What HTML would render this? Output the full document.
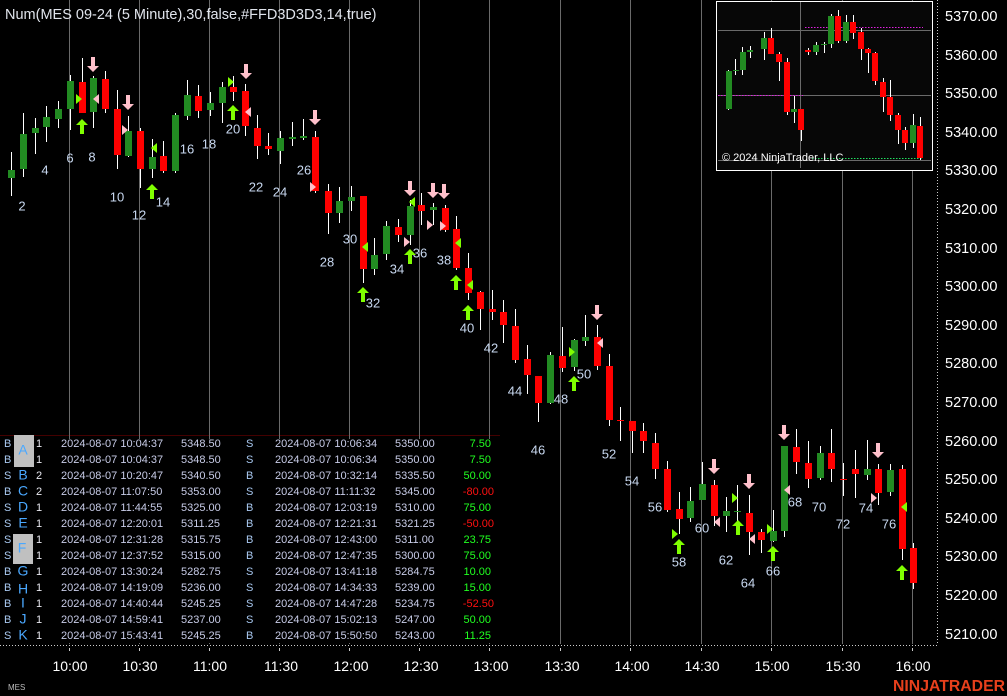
<!DOCTYPE html>
<html><head><meta charset="utf-8"><style>
html,body{margin:0;padding:0;background:#000;width:1007px;height:696px;overflow:hidden}
svg{display:block}
text{font-family:"Liberation Sans",sans-serif}
.n{fill:#c8d8f0;font-size:13px;text-anchor:middle;dominant-baseline:middle;font-family:"DejaVu Sans","Liberation Sans",sans-serif}
.t{font-size:11px;dominant-baseline:middle;font-family:"Liberation Sans",sans-serif}
</style></head><body>
<svg width="1007" height="696" viewBox="0 0 1007 696" xmlns="http://www.w3.org/2000/svg">
<defs>
<path id="up" d="M0,0 L6,6 L2,6 L2,15 L-2,15 L-2,6 L-6,6Z" fill="#80ff00"/>
<path id="dn" d="M-2,0 L2,0 L2,9 L6,9 L0,15 L-6,9 L-2,9Z" fill="#ffc0cb"/>
<path id="lr" d="M-3,-5 L3,0 L-3,5Z" fill="#80ff00"/>
<path id="ll" d="M3,-5 L-3,0 L3,5Z" fill="#80ff00"/>
<path id="pr" d="M-3,-5 L3,0 L-3,5Z" fill="#ffc0cb"/>
<path id="pl" d="M3,-5 L-3,0 L3,5Z" fill="#ffc0cb"/>
</defs>
<rect width="1007" height="696" fill="#000"/>
<g stroke="#6a6a6a" stroke-width="1">
<line x1="69.5" y1="0" x2="69.5" y2="644"/><line x1="139.5" y1="0" x2="139.5" y2="644"/><line x1="209.5" y1="0" x2="209.5" y2="644"/><line x1="279.5" y1="0" x2="279.5" y2="644"/><line x1="349.5" y1="0" x2="349.5" y2="644"/><line x1="419.5" y1="0" x2="419.5" y2="644"/><line x1="489.5" y1="0" x2="489.5" y2="644"/><line x1="560.5" y1="0" x2="560.5" y2="644"/><line x1="630.5" y1="0" x2="630.5" y2="644"/><line x1="701.5" y1="0" x2="701.5" y2="644"/><line x1="771.5" y1="0" x2="771.5" y2="644"/><line x1="842.5" y1="0" x2="842.5" y2="644"/><line x1="912.5" y1="0" x2="912.5" y2="644"/>
</g>
<g stroke="#fff" stroke-width="1">
<line x1="11.5" y1="152" x2="11.5" y2="196"/><line x1="23.5" y1="113" x2="23.5" y2="177"/><line x1="35.5" y1="118" x2="35.5" y2="154"/><line x1="46.5" y1="106" x2="46.5" y2="142"/><line x1="58.5" y1="101" x2="58.5" y2="128"/><line x1="70.5" y1="75" x2="70.5" y2="130"/><line x1="82.5" y1="58" x2="82.5" y2="113"/><line x1="93.5" y1="76" x2="93.5" y2="128"/><line x1="105.5" y1="71" x2="105.5" y2="113"/><line x1="117.5" y1="90" x2="117.5" y2="169"/><line x1="128.5" y1="116" x2="128.5" y2="157"/><line x1="140.5" y1="128" x2="140.5" y2="188"/><line x1="152.5" y1="139" x2="152.5" y2="178"/><line x1="163.5" y1="141" x2="163.5" y2="173"/><line x1="175.5" y1="113" x2="175.5" y2="173"/><line x1="187.5" y1="80" x2="187.5" y2="120"/><line x1="198.5" y1="85" x2="198.5" y2="118"/><line x1="210.5" y1="92" x2="210.5" y2="116"/><line x1="222.5" y1="82" x2="222.5" y2="123"/><line x1="233.5" y1="76" x2="233.5" y2="101"/><line x1="245.5" y1="84" x2="245.5" y2="136"/><line x1="257.5" y1="115" x2="257.5" y2="159"/><line x1="268.5" y1="133" x2="268.5" y2="155"/><line x1="280.5" y1="131" x2="280.5" y2="164"/><line x1="292.5" y1="122" x2="292.5" y2="146"/><line x1="303.5" y1="119" x2="303.5" y2="140"/><line x1="315.5" y1="131" x2="315.5" y2="193"/><line x1="328.5" y1="184" x2="328.5" y2="234"/><line x1="339.5" y1="187" x2="339.5" y2="223"/><line x1="351.5" y1="186" x2="351.5" y2="211"/><line x1="363.5" y1="196" x2="363.5" y2="283"/><line x1="374.5" y1="238" x2="374.5" y2="275"/><line x1="386.5" y1="221" x2="386.5" y2="260"/><line x1="398.5" y1="219" x2="398.5" y2="242"/><line x1="410.5" y1="200" x2="410.5" y2="245"/><line x1="421.5" y1="193" x2="421.5" y2="225"/><line x1="433.5" y1="203" x2="433.5" y2="225"/><line x1="445.5" y1="205" x2="445.5" y2="232"/><line x1="456.5" y1="216" x2="456.5" y2="270"/><line x1="468.5" y1="253" x2="468.5" y2="300"/><line x1="480.5" y1="291" x2="480.5" y2="330"/><line x1="492.5" y1="290" x2="492.5" y2="320"/><line x1="503.5" y1="300" x2="503.5" y2="343"/><line x1="515.5" y1="309" x2="515.5" y2="363"/><line x1="527.5" y1="345" x2="527.5" y2="394"/><line x1="538.5" y1="376" x2="538.5" y2="422"/><line x1="550.5" y1="352" x2="550.5" y2="404"/><line x1="562.5" y1="327" x2="562.5" y2="372"/><line x1="574.5" y1="339" x2="574.5" y2="371"/><line x1="585.5" y1="315" x2="585.5" y2="346"/><line x1="597.5" y1="325" x2="597.5" y2="370"/><line x1="609.5" y1="354" x2="609.5" y2="426"/><line x1="620.5" y1="407" x2="620.5" y2="441"/><line x1="632.5" y1="421" x2="632.5" y2="453"/><line x1="643.5" y1="423" x2="643.5" y2="453"/><line x1="655.5" y1="433" x2="655.5" y2="479"/><line x1="667.5" y1="461" x2="667.5" y2="512"/><line x1="679.5" y1="492" x2="679.5" y2="534"/><line x1="690.5" y1="487" x2="690.5" y2="522"/><line x1="702.5" y1="462" x2="702.5" y2="500"/><line x1="714.5" y1="480" x2="714.5" y2="526"/><line x1="726.5" y1="497" x2="726.5" y2="532"/><line x1="737.5" y1="485" x2="737.5" y2="532"/><line x1="749.5" y1="495" x2="749.5" y2="555"/><line x1="761.5" y1="529" x2="761.5" y2="553"/><line x1="773.5" y1="510" x2="773.5" y2="542"/><line x1="784.5" y1="446" x2="784.5" y2="537"/><line x1="796.5" y1="429" x2="796.5" y2="474"/><line x1="808.5" y1="441" x2="808.5" y2="488"/><line x1="820.5" y1="446" x2="820.5" y2="480"/><line x1="831.5" y1="429" x2="831.5" y2="482"/><line x1="843.5" y1="463" x2="843.5" y2="496"/><line x1="855.5" y1="450" x2="855.5" y2="498"/><line x1="867.5" y1="440" x2="867.5" y2="480"/><line x1="878.5" y1="464" x2="878.5" y2="505"/><line x1="890.5" y1="464" x2="890.5" y2="496"/><line x1="902.5" y1="465" x2="902.5" y2="560"/><line x1="913.5" y1="543" x2="913.5" y2="589"/>
</g>
<g fill="#228b22">
<rect x="8" y="170" width="7" height="8"/><rect x="20" y="134" width="7" height="35"/><rect x="32" y="128" width="7" height="5"/><rect x="43" y="117" width="7" height="10"/><rect x="55" y="109" width="7" height="10"/><rect x="67" y="81" width="7" height="28"/><rect x="90" y="78" width="7" height="34"/><rect x="125" y="131" width="7" height="25"/><rect x="149" y="157" width="7" height="12"/><rect x="172" y="115" width="7" height="56"/><rect x="184" y="95" width="7" height="21"/><rect x="207" y="103" width="7" height="7"/><rect x="219" y="87" width="7" height="16"/><rect x="277" y="138" width="7" height="13"/><rect x="289" y="137" width="7" height="2"/><rect x="300" y="136" width="7" height="2"/><rect x="336" y="201" width="7" height="12"/><rect x="348" y="197" width="7" height="4"/><rect x="371" y="255" width="7" height="14"/><rect x="383" y="226" width="7" height="28"/><rect x="407" y="206" width="7" height="29"/><rect x="430" y="207" width="7" height="3"/><rect x="547" y="355" width="7" height="48"/><rect x="571" y="340" width="7" height="27"/><rect x="582" y="337" width="7" height="4"/><rect x="687" y="501" width="7" height="17"/><rect x="699" y="484" width="7" height="16"/><rect x="723" y="511" width="7" height="5"/><rect x="734" y="511" width="7" height="1"/><rect x="770" y="531" width="7" height="10"/><rect x="781" y="446" width="7" height="85"/><rect x="817" y="453" width="7" height="25"/><rect x="864" y="469" width="7" height="6"/><rect x="887" y="470" width="7" height="22"/>
</g>
<g fill="#ff0000">
<rect x="79" y="82" width="7" height="31"/><rect x="102" y="79" width="7" height="30"/><rect x="114" y="109" width="7" height="46"/><rect x="137" y="131" width="7" height="38"/><rect x="160" y="156" width="7" height="15"/><rect x="195" y="96" width="7" height="15"/><rect x="230" y="87" width="7" height="5"/><rect x="242" y="91" width="7" height="35"/><rect x="254" y="128" width="7" height="18"/><rect x="265" y="146" width="7" height="3"/><rect x="312" y="137" width="7" height="54"/><rect x="325" y="191" width="7" height="22"/><rect x="360" y="196" width="7" height="73"/><rect x="395" y="227" width="7" height="8"/><rect x="418" y="205" width="7" height="6"/><rect x="442" y="208" width="7" height="22"/><rect x="453" y="229" width="7" height="39"/><rect x="465" y="268" width="7" height="25"/><rect x="477" y="292" width="7" height="17"/><rect x="489" y="309" width="7" height="3"/><rect x="500" y="312" width="7" height="13"/><rect x="512" y="326" width="7" height="34"/><rect x="524" y="359" width="7" height="16"/><rect x="535" y="376" width="7" height="27"/><rect x="559" y="356" width="7" height="12"/><rect x="594" y="337" width="7" height="29"/><rect x="606" y="366" width="7" height="54"/><rect x="617" y="420" width="7" height="1"/><rect x="629" y="421" width="7" height="10"/><rect x="640" y="431" width="7" height="10"/><rect x="652" y="443" width="7" height="26"/><rect x="664" y="469" width="7" height="41"/><rect x="676" y="509" width="7" height="10"/><rect x="711" y="485" width="7" height="31"/><rect x="746" y="513" width="7" height="19"/><rect x="758" y="532" width="7" height="8"/><rect x="793" y="447" width="7" height="15"/><rect x="805" y="463" width="7" height="16"/><rect x="828" y="453" width="7" height="16"/><rect x="840" y="479" width="7" height="1"/><rect x="852" y="469" width="7" height="5"/><rect x="875" y="469" width="7" height="24"/><rect x="899" y="469" width="7" height="80"/><rect x="910" y="548" width="7" height="35"/>
</g>
<use href="#up" x="82" y="119"/><use href="#up" x="152" y="184"/><use href="#up" x="233" y="105"/><use href="#up" x="363" y="287"/><use href="#up" x="410" y="249"/><use href="#up" x="456" y="275"/><use href="#up" x="468" y="305"/><use href="#up" x="574" y="376"/><use href="#up" x="679" y="539"/><use href="#up" x="738" y="520"/><use href="#up" x="773" y="546"/><use href="#up" x="902" y="565"/>
<use href="#dn" x="93" y="57"/><use href="#dn" x="128" y="95"/><use href="#dn" x="246" y="64"/><use href="#dn" x="315" y="110"/><use href="#dn" x="410" y="181"/><use href="#dn" x="433" y="183"/><use href="#dn" x="444" y="184"/><use href="#dn" x="597" y="305"/><use href="#dn" x="714" y="459"/><use href="#dn" x="749" y="474"/><use href="#dn" x="784" y="425"/><use href="#dn" x="878" y="443"/>
<use href="#lr" x="79" y="99"/><use href="#pl" x="96" y="99"/><use href="#pr" x="125" y="130"/><use href="#ll" x="154" y="148"/><use href="#lr" x="231" y="82"/><use href="#pl" x="248" y="112"/><use href="#pr" x="313" y="187"/><use href="#ll" x="365" y="247"/><use href="#pr" x="407" y="242"/><use href="#ll" x="412" y="202"/><use href="#pr" x="430" y="225"/><use href="#pr" x="443" y="226"/><use href="#ll" x="458" y="243"/><use href="#ll" x="470" y="285"/><use href="#lr" x="572" y="352"/><use href="#pl" x="600" y="343"/><use href="#lr" x="675" y="534"/><use href="#pl" x="717" y="522"/><use href="#lr" x="735" y="498"/><use href="#pl" x="752" y="539"/><use href="#lr" x="770" y="529"/><use href="#pl" x="787" y="490"/><use href="#pr" x="874" y="498"/><use href="#ll" x="904" y="507"/>
<g class="n">
<text x="22" y="207">2</text><text x="45" y="171">4</text><text x="70" y="159">6</text><text x="92" y="158">8</text><text x="117" y="198">10</text><text x="139" y="216">12</text><text x="163" y="203">14</text><text x="187" y="150">16</text><text x="209" y="145">18</text><text x="233" y="130">20</text><text x="256" y="188">22</text><text x="280" y="193">24</text><text x="304" y="171">26</text><text x="327" y="263">28</text><text x="350" y="240">30</text><text x="373" y="304">32</text><text x="397" y="270">34</text><text x="420" y="254">36</text><text x="444" y="261">38</text><text x="467" y="329">40</text><text x="491" y="349">42</text><text x="515" y="392">44</text><text x="538" y="451">46</text><text x="561" y="400">48</text><text x="584" y="375">50</text><text x="609" y="455">52</text><text x="632" y="482">54</text><text x="655" y="508">56</text><text x="679" y="563">58</text><text x="702" y="529">60</text><text x="726" y="561">62</text><text x="748" y="584">64</text><text x="773" y="572">66</text><text x="795" y="503">68</text><text x="819" y="508">70</text><text x="843" y="525">72</text><text x="866" y="509">74</text><text x="889" y="525">76</text>
</g>
<text x="5" y="19" fill="#e0e4ec" font-size="14.5">Num(MES 09-24 (5 Minute),30,false,#FFD3D3D3,14,true)</text>
<rect x="0" y="435" width="500" height="208" fill="#000"/>
<line x1="0" y1="435.5" x2="500" y2="435.5" stroke="#400" stroke-width="1"/>
<g stroke="#6a6a6a"><line x1="69.5" y1="435" x2="69.5" y2="439"/><line x1="139.5" y1="435" x2="139.5" y2="439"/><line x1="209.5" y1="435" x2="209.5" y2="439"/><line x1="279.5" y1="435" x2="279.5" y2="439"/><line x1="349.5" y1="435" x2="349.5" y2="439"/><line x1="419.5" y1="435" x2="419.5" y2="439"/><line x1="489.5" y1="435" x2="489.5" y2="439"/></g>
<rect x="14" y="435" width="20" height="32" fill="#c0c0c0"/>
<rect x="13" y="534" width="20" height="30" fill="#c0c0c0"/>
<g class="t">
<g fill="#a8c8f0"><text x="4" y="444">B</text><text x="4" y="460">B</text><text x="4" y="476">S</text><text x="4" y="492">B</text><text x="4" y="508">S</text><text x="4" y="524">S</text><text x="4" y="540">S</text><text x="4" y="556">S</text><text x="4" y="572">B</text><text x="4" y="588">B</text><text x="4" y="604">B</text><text x="4" y="620">B</text><text x="4" y="636">S</text></g>
<g fill="#4aa8ff" font-size="14" text-anchor="middle"><text x="23" y="451">A</text><text x="23" y="476">B</text><text x="23" y="492">C</text><text x="23" y="508">D</text><text x="23" y="524">E</text><text x="22" y="549">F</text><text x="23" y="572">G</text><text x="23" y="590">H</text><text x="23" y="604">I</text><text x="23" y="620">J</text><text x="23" y="636">K</text></g>
<g fill="#e8e8f0"><text x="36" y="444">1</text><text x="36" y="460">1</text><text x="36" y="476">2</text><text x="36" y="492">2</text><text x="36" y="508">1</text><text x="36" y="524">1</text><text x="36" y="540">1</text><text x="36" y="556">1</text><text x="36" y="572">1</text><text x="36" y="588">1</text><text x="36" y="604">1</text><text x="36" y="620">1</text><text x="36" y="636">1</text></g>
<g fill="#c8cce8"><text x="61" y="444">2024-08-07 10:04:37</text><text x="61" y="460">2024-08-07 10:04:37</text><text x="61" y="476">2024-08-07 10:20:47</text><text x="61" y="492">2024-08-07 11:07:50</text><text x="61" y="508">2024-08-07 11:44:55</text><text x="61" y="524">2024-08-07 12:20:01</text><text x="61" y="540">2024-08-07 12:31:28</text><text x="61" y="556">2024-08-07 12:37:52</text><text x="61" y="572">2024-08-07 13:30:24</text><text x="61" y="588">2024-08-07 14:19:09</text><text x="61" y="604">2024-08-07 14:40:44</text><text x="61" y="620">2024-08-07 14:59:41</text><text x="61" y="636">2024-08-07 15:43:41</text></g>
<g fill="#c8cce8"><text x="181" y="444">5348.50</text><text x="181" y="460">5348.50</text><text x="181" y="476">5340.50</text><text x="181" y="492">5353.00</text><text x="181" y="508">5325.00</text><text x="181" y="524">5311.25</text><text x="181" y="540">5315.75</text><text x="181" y="556">5315.00</text><text x="181" y="572">5282.75</text><text x="181" y="588">5236.00</text><text x="181" y="604">5245.25</text><text x="181" y="620">5237.00</text><text x="181" y="636">5245.25</text></g>
<g fill="#a8c8f0"><text x="246" y="444">S</text><text x="246" y="460">S</text><text x="246" y="476">B</text><text x="246" y="492">S</text><text x="246" y="508">B</text><text x="246" y="524">B</text><text x="246" y="540">B</text><text x="246" y="556">B</text><text x="246" y="572">S</text><text x="246" y="588">S</text><text x="246" y="604">S</text><text x="246" y="620">S</text><text x="246" y="636">B</text></g>
<g fill="#c8cce8"><text x="275" y="444">2024-08-07 10:06:34</text><text x="275" y="460">2024-08-07 10:06:34</text><text x="275" y="476">2024-08-07 10:32:14</text><text x="275" y="492">2024-08-07 11:11:32</text><text x="275" y="508">2024-08-07 12:03:19</text><text x="275" y="524">2024-08-07 12:21:31</text><text x="275" y="540">2024-08-07 12:43:00</text><text x="275" y="556">2024-08-07 12:47:35</text><text x="275" y="572">2024-08-07 13:41:18</text><text x="275" y="588">2024-08-07 14:34:33</text><text x="275" y="604">2024-08-07 14:47:28</text><text x="275" y="620">2024-08-07 15:02:13</text><text x="275" y="636">2024-08-07 15:50:50</text></g>
<g fill="#c8cce8"><text x="395" y="444">5350.00</text><text x="395" y="460">5350.00</text><text x="395" y="476">5335.50</text><text x="395" y="492">5345.00</text><text x="395" y="508">5310.00</text><text x="395" y="524">5321.25</text><text x="395" y="540">5311.00</text><text x="395" y="556">5300.00</text><text x="395" y="572">5284.75</text><text x="395" y="588">5239.00</text><text x="395" y="604">5234.75</text><text x="395" y="620">5247.00</text><text x="395" y="636">5243.00</text></g>
<g text-anchor="end"><text x="491" y="444" fill="#20ff20">7.50</text><text x="491" y="460" fill="#20ff20">7.50</text><text x="491" y="476" fill="#20ff20">50.00</text><text x="494" y="492" fill="#ff1010">-80.00</text><text x="491" y="508" fill="#20ff20">75.00</text><text x="494" y="524" fill="#ff1010">-50.00</text><text x="491" y="540" fill="#20ff20">23.75</text><text x="491" y="556" fill="#20ff20">75.00</text><text x="491" y="572" fill="#20ff20">10.00</text><text x="491" y="588" fill="#20ff20">15.00</text><text x="494" y="604" fill="#ff1010">-52.50</text><text x="491" y="620" fill="#20ff20">50.00</text><text x="491" y="636" fill="#20ff20">11.25</text></g>
</g>
<rect x="716.5" y="1.5" width="216" height="169" fill="#070707" stroke="#fff" stroke-width="1"/>
<g stroke="#6a6a6a"><line x1="718" y1="30.5" x2="931" y2="30.5"/><line x1="718" y1="95.5" x2="931" y2="95.5"/><line x1="718" y1="160.5" x2="931" y2="160.5"/><line x1="800.5" y1="2" x2="800.5" y2="168"/></g>
<g stroke="#e020e0" stroke-dasharray="1.5,1.5"><line x1="805" y1="27.5" x2="923" y2="27.5"/><line x1="718" y1="95.5" x2="803" y2="95.5"/></g>
<line x1="812" y1="158.5" x2="923" y2="158.5" stroke="#20e060" stroke-dasharray="1.5,1.5"/>
<g stroke="#fff"><line x1="728.5" y1="70" x2="728.5" y2="110"/><line x1="735.5" y1="59" x2="735.5" y2="75"/><line x1="742.5" y1="47" x2="742.5" y2="75"/><line x1="750.5" y1="46" x2="750.5" y2="58"/><line x1="764.5" y1="32" x2="764.5" y2="60"/><line x1="771.5" y1="28" x2="771.5" y2="54"/><line x1="779.5" y1="52" x2="779.5" y2="81"/><line x1="787.5" y1="58" x2="787.5" y2="115"/><line x1="794.5" y1="96" x2="794.5" y2="123"/><line x1="801.5" y1="109" x2="801.5" y2="141"/><line x1="808.5" y1="48" x2="808.5" y2="55"/><line x1="816.5" y1="42" x2="816.5" y2="55"/><line x1="824.5" y1="42" x2="824.5" y2="53"/><line x1="831.5" y1="14" x2="831.5" y2="48"/><line x1="838.5" y1="10" x2="838.5" y2="43"/><line x1="846.5" y1="15" x2="846.5" y2="43"/><line x1="853.5" y1="15" x2="853.5" y2="39"/><line x1="861.5" y1="28" x2="861.5" y2="60"/><line x1="868.5" y1="48" x2="868.5" y2="73"/><line x1="875.5" y1="52" x2="875.5" y2="85"/><line x1="883.5" y1="78" x2="883.5" y2="112"/><line x1="890.5" y1="80" x2="890.5" y2="121"/><line x1="898.5" y1="113" x2="898.5" y2="144"/><line x1="905.5" y1="127" x2="905.5" y2="150"/><line x1="913.5" y1="114" x2="913.5" y2="148"/><line x1="920.5" y1="117" x2="920.5" y2="160"/></g>
<g fill="#228b22"><rect x="726" y="71" width="6" height="38"/><rect x="733" y="70" width="6" height="1"/><rect x="740" y="52" width="6" height="18"/><rect x="747" y="50" width="6" height="2"/><rect x="761" y="38" width="6" height="11"/><rect x="791" y="109" width="6" height="3"/><rect x="813" y="45" width="6" height="7"/><rect x="821" y="44" width="6" height="1"/><rect x="828" y="16" width="6" height="28"/><rect x="843" y="22" width="6" height="19"/><rect x="910" y="125" width="6" height="18"/></g>
<g fill="#ff0000"><rect x="768" y="38" width="6" height="16"/><rect x="776" y="54" width="6" height="8"/><rect x="784" y="62" width="6" height="50"/><rect x="798" y="109" width="6" height="21"/><rect x="805" y="50" width="6" height="2"/><rect x="835" y="16" width="6" height="25"/><rect x="850" y="22" width="6" height="11"/><rect x="858" y="32" width="6" height="17"/><rect x="865" y="49" width="6" height="4"/><rect x="872" y="53" width="6" height="28"/><rect x="880" y="82" width="6" height="15"/><rect x="887" y="97" width="6" height="18"/><rect x="895" y="115" width="6" height="15"/><rect x="902" y="130" width="6" height="13"/><rect x="917" y="126" width="6" height="32"/></g>
<text x="722" y="161" fill="#fff" font-size="11">© 2024 NinjaTrader, LLC</text>
<line x1="937.5" y1="0" x2="937.5" y2="645" stroke="#ccc" stroke-dasharray="1,2"/>
<g fill="#fff" font-size="14.5" dominant-baseline="middle">
<text x="945" y="17">5370.00</text><text x="945" y="56">5360.00</text><text x="945" y="94">5350.00</text><text x="945" y="133">5340.00</text><text x="945" y="171">5330.00</text><text x="945" y="210">5320.00</text><text x="945" y="249">5310.00</text><text x="945" y="287">5300.00</text><text x="945" y="326">5290.00</text><text x="945" y="364">5280.00</text><text x="945" y="403">5270.00</text><text x="945" y="442">5260.00</text><text x="945" y="480">5250.00</text><text x="945" y="519">5240.00</text><text x="945" y="557">5230.00</text><text x="945" y="596">5220.00</text><text x="945" y="635">5210.00</text>
</g>
<line x1="0" y1="645.5" x2="937" y2="645.5" stroke="#ccc" stroke-dasharray="1,2"/>
<g stroke="#ccc"><line x1="69.5" y1="648" x2="69.5" y2="651"/><line x1="139.5" y1="648" x2="139.5" y2="651"/><line x1="209.5" y1="648" x2="209.5" y2="651"/><line x1="279.5" y1="648" x2="279.5" y2="651"/><line x1="349.5" y1="648" x2="349.5" y2="651"/><line x1="419.5" y1="648" x2="419.5" y2="651"/><line x1="489.5" y1="648" x2="489.5" y2="651"/><line x1="560.5" y1="648" x2="560.5" y2="651"/><line x1="630.5" y1="648" x2="630.5" y2="651"/><line x1="701.5" y1="648" x2="701.5" y2="651"/><line x1="771.5" y1="648" x2="771.5" y2="651"/><line x1="842.5" y1="648" x2="842.5" y2="651"/><line x1="912.5" y1="648" x2="912.5" y2="651"/></g>
<g fill="#fff" font-size="14" text-anchor="middle">
<text x="70" y="671">10:00</text><text x="140" y="671">10:30</text><text x="210" y="671">11:00</text><text x="281" y="671">11:30</text><text x="351" y="671">12:00</text><text x="421" y="671">12:30</text><text x="491" y="671">13:00</text><text x="562" y="671">13:30</text><text x="632" y="671">14:00</text><text x="702" y="671">14:30</text><text x="772" y="671">15:00</text><text x="843" y="671">15:30</text><text x="913" y="671">16:00</text>
</g>
<text x="8" y="690" fill="#bbb" font-size="8">MES</text>
<text x="1005" y="691" fill="#e8401c" font-size="16" font-weight="bold" text-anchor="end" textLength="112" lengthAdjust="spacingAndGlyphs">NINJATRADER</text>
</svg>
</body></html>
